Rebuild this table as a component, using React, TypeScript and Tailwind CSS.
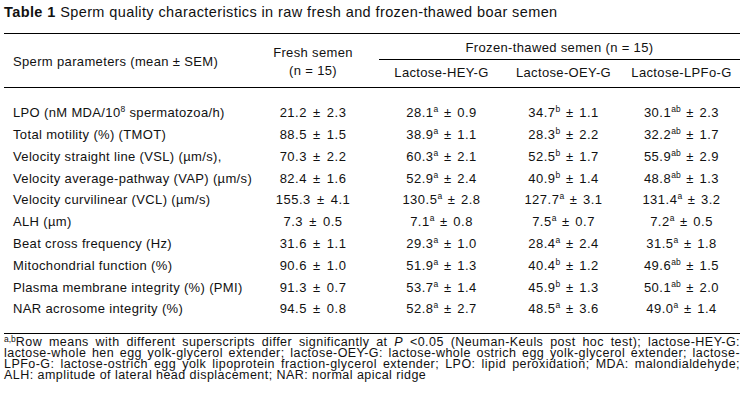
const rows: [React.ReactNode, string, string[]][] = [
  [
    <>
      LPO (nM MDA/10<sup className="text-[8.5px] relative -top-[5px]">8</sup> spermatozoa/h)
    </>,
    "21.2 ± 2.3",
    ["28.1|a|0.9", "34.7|b|1.1", "30.1|ab|2.3"],
  ],
  ["Total motility (%) (TMOT)", "88.5 ± 1.5", ["38.9|a|1.1", "28.3|b|2.2", "32.2|ab|1.7"]],
  ["Velocity straight line (VSL) (µm/s),", "70.3 ± 2.2", ["60.3|a|2.1", "52.5|b|1.7", "55.9|ab|2.9"]],
  ["Velocity average-pathway (VAP) (µm/s)", "82.4 ± 1.6", ["52.9|a|2.4", "40.9|b|1.4", "48.8|ab|1.3"]],
  ["Velocity curvilinear (VCL) (µm/s)", "155.3 ± 4.1", ["130.5|a|2.8", "127.7|a|3.1", "131.4|a|3.2"]],
  ["ALH (µm)", "7.3 ± 0.5", ["7.1|a|0.8", "7.5|a|0.7", "7.2|a|0.5"]],
  ["Beat cross frequency (Hz)", "31.6 ± 1.1", ["29.3|a|1.0", "28.4|a|2.4", "31.5|a|1.8"]],
  ["Mitochondrial function (%)", "90.6 ± 1.0", ["51.9|a|1.3", "40.4|b|1.2", "49.6|ab|1.5"]],
  ["Plasma membrane integrity (%) (PMI)", "91.3 ± 0.7", ["53.7|a|1.4", "45.9|b|1.3", "50.1|ab|2.0"]],
  ["NAR acrosome integrity (%)", "94.5 ± 0.8", ["52.8|a|2.7", "48.5|a|3.6", "49.0|a|1.4"]],
];

function Val({ v }: { v: string }) {
  const [mean, sup, sem] = v.split("|");
  return (
    <span>
      {mean}
      <sup className="text-[8.5px] relative -top-[5px] tracking-normal">{sup}</sup> ± {sem}
    </span>
  );
}

// footnote lines, each justified to the full width like the original
const notes = [
  <>
    <sup className="text-[8.5px] relative -top-[4px] tracking-normal">a,b</sup>Row means with different superscripts
    differ significantly at <i>P</i> &lt;0.05 (Neuman-Keuls post hoc test); lactose-HEY-G:
  </>,
  <>
    lactose-whole hen egg yolk-glycerol extender; lactose-OEY-G: lactose-whole ostrich egg yolk-glycerol extender;
    lactose-
  </>,
  <>
    LPFo-G: lactose-ostrich egg yolk lipoprotein fraction-glycerol extender; LPO: lipid peroxidation; MDA:
    malondialdehyde;
  </>,
];

export default function App() {
  return (
    <div
      className="w-[752px] h-[408px] bg-white text-[#111] pl-[4px] pt-[4px]"
      style={{ fontFamily: '"Liberation Sans", Arial, sans-serif' }}
    >
      <div className="text-[14.5px] leading-[16px] tracking-[0.4px]">
        <b>Table 1</b> Sperm quality characteristics in raw fresh and frozen-thawed boar semen
      </div>

      <div className="w-[736px] mt-[13px] border-t border-black text-[13px] tracking-[0.35px]">
        {/* header */}
        <div className="flex h-[54px] border-b border-black">
          <div className="w-[260px] pl-[9px] flex items-center pt-[3px]">Sperm parameters (mean ± SEM)</div>
          <div className="w-[98px] flex flex-col items-center justify-center leading-[18px] pt-[2px]">
            <span>Fresh semen</span>
            <span>(n = 15)</span>
          </div>
          <div className="w-[17px]" />
          <div className="w-[361px] flex flex-col">
            <div className="h-[26px] border-b border-black flex items-center justify-center pt-[2px]">
              Frozen-thawed semen (n = 15)
            </div>
            <div className="flex flex-1 items-center pb-[1px]">
              <div className="w-[125px] text-center">Lactose-HEY-G</div>
              <div className="w-[119px] text-center">Lactose-OEY-G</div>
              <div className="w-[117px] text-center">Lactose-LPFo-G</div>
            </div>
          </div>
        </div>

        {/* body */}
        <div className="pt-[14px] pb-[13px] border-b border-black">
          {rows.map(([label, fresh, frozen], i) => (
            <div key={i} className="flex h-[21.8px] items-center">
              <div className="w-[260px] pl-[9px] whitespace-nowrap">{label}</div>
              <div className="w-[98px] text-center tracking-[0.5px] [word-spacing:2px]">{fresh}</div>
              <div className="w-[17px]" />
              <div className="w-[125px] text-center tracking-[0.5px] [word-spacing:1.5px]">
                <Val v={frozen[0]} />
              </div>
              <div className="w-[119px] text-center tracking-[0.5px] [word-spacing:1.5px]">
                <Val v={frozen[1]} />
              </div>
              <div className="w-[117px] text-center tracking-[0.5px] [word-spacing:1.5px]">
                <Val v={frozen[2]} />
              </div>
            </div>
          ))}
        </div>

        {/* footnote */}
        <div className="text-[12.5px] leading-[11px] tracking-[0.45px] pt-[3px]">
          {notes.map((n, i) => (
            <p key={i} className="text-justify [text-align-last:justify]">
              {n}
            </p>
          ))}
          <p>ALH: amplitude of lateral head displacement; NAR: normal apical ridge</p>
        </div>
      </div>
    </div>
  );
}
